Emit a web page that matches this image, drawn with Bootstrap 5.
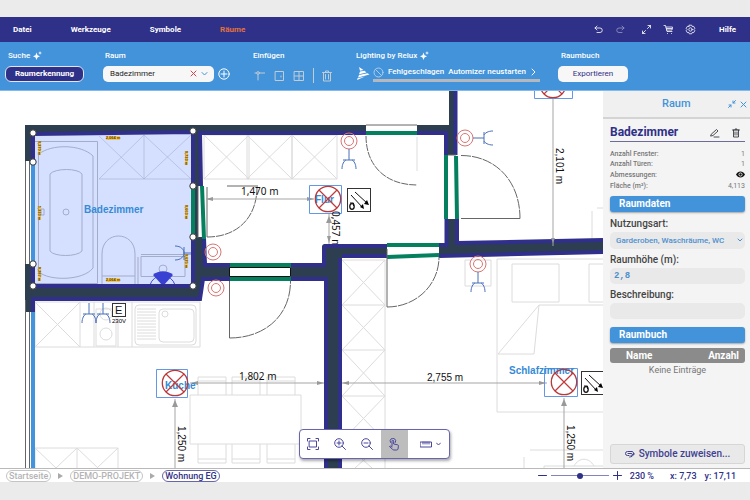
<!DOCTYPE html>
<html lang="de">
<head>
<meta charset="utf-8">
<meta name="viewport" content="width=device-width, initial-scale=1">
<title>Raumplaner</title>
<link href="https://cdn.jsdelivr.net/npm/bootstrap@5.3.0/dist/css/bootstrap.min.css" rel="stylesheet">
<style>
:root{--navy:#2f3088;--sky:#4393da}
body{font-family:Roboto,sans-serif;font-size:9px;line-height:12px;background:#ebebeb;padding:17px 0 18px}
svg{display:block;flex:none}
button,input,select{font:inherit;color:inherit}
.plain{background:none;border:0;padding:0}
.ico{fill:none;stroke:currentColor;stroke-width:1;stroke-linecap:round;stroke-linejoin:round}
.topbar{background:var(--navy);color:#fff;height:25px;padding:0 14px 0 13px;font-size:8px;font-weight:700}
.topbar .ico{stroke-width:.8}
.topbar a{color:#fff;text-decoration:none}
.topbar a.current{color:#e2703d}
.menu{gap:39px}
.tools{gap:11px}
.ribbon{background:var(--sky);color:#fff;height:49px;padding:7px 8px 0;border-bottom:1px solid #86b9e8;display:grid;grid-template-columns:97px 148px 103px 205px 1fr;font-size:8px}
.ribbon h2{font-size:8px;line-height:13px;font-weight:500;margin:0 0 3px;display:flex;gap:3px;align-items:center}
.ctl{height:17px;display:flex;align-items:center}
.scan{background:var(--navy);border:1px solid #dfe6f5;border-radius:6px;height:16px;width:79px;margin-left:-3px;font-weight:700;padding:0}
.combo{background:#f7f7f7;border-radius:5px;width:111px;height:16px;margin-left:-2px;padding:0 6px 0 7px;color:#222}
.combo input{background:none;border:0;min-width:0;flex:1;padding:0}
.export{background:#f7f7f7;color:var(--navy);border:0;border-radius:5px;height:16px;width:70px;margin-left:-3px}
.job{border-bottom:3px solid #b5b9be;height:17px;width:167px;font-weight:500;white-space:nowrap}
.stage{background:#fff;min-width:0}
.stage>svg{position:absolute;inset:0;width:100%;height:100%}
.zoombar{position:absolute;left:50%;transform:translateX(-3px);bottom:9px;background:#fff;border:1px solid #6864ad;border-radius:4px;height:30px;color:#4a479d;box-shadow:1px 2px 3px #0005;z-index:2}
.zoombar button{width:27px;height:28px;display:flex;align-items:center;justify-content:center}
.zoombar button.on{background:#bdbdbd}
.zoombar button.wide{width:41px;gap:4px;padding-left:4px}
.side{width:147px;background:#f4f4f4;flex:none;color:#555}
.side header{height:28px;background:#f0f0f0;border-bottom:2px solid #d4d4d4;color:var(--sky);padding:0 3px 0 7px}
.side header h1{font-size:11px;font-weight:500;margin:0 0 0 52px}
.side header .ico{color:var(--sky)}
.sbody{padding:5px 5px 4px 7px}
.rname{height:18px;border-bottom:1px solid #6d6a9c;color:var(--navy);margin-bottom:7px;padding-right:5px}
.rname .ico{stroke-width:.8}
.rname h2{font-size:12px;font-weight:700;margin:0}
.facts{margin:0 0 5px;font-size:7px;color:#777}
.facts div{display:flex;justify-content:space-between;height:10px;line-height:10px;align-items:center}
.facts div+div+div{height:11px}
.facts dt{font-weight:500}
.facts dd{margin:0}
.sect{background:var(--sky);color:#fff;border-radius:3px;height:16px;line-height:15px;font-size:10px;font-weight:700;padding-left:9px;margin:0;box-shadow:0 1px 2px #0005}
.side label{font-size:10px;line-height:12px;font-weight:500;color:#444;display:block;margin:5px 0 2px}
.side .sect+label{margin-top:6px}
.field{display:block;width:100%;height:16px;border:0;border-radius:5px;background:#e9e9e9;color:#4d90ce;padding:0 4px;font-weight:500}
select.field{appearance:none;font-size:8px;height:17px;padding:0 6px}
.pick{position:relative}
.pick svg{position:absolute;right:2px;top:6px;color:var(--sky);pointer-events:none}
.mono{font-family:"Liberation Mono",monospace;font-weight:700}
.book{width:100%;margin-top:5px;font-size:10px;border-collapse:separate;border-spacing:0}
.book th{background:#8b8b8b;color:#fff;height:15px;line-height:15px;padding:0 6px 0 16px;font-weight:700}
.book th:first-child{border-radius:3px 0 0 3px}
.book th:last-child{border-radius:0 3px 3px 0;text-align:right}
.book td{font-size:9px;line-height:11px;text-align:center;padding-top:2px;color:#777}
.assign{background:#e9e9e9;border:1px solid #d6d6d6;border-radius:3px;height:20px;color:#403e91;font-size:10px;font-weight:500}
.status{background:#fff;border-top:1px solid #b9b9b9;height:14px;padding:0 14px 0 6px;color:var(--navy);font-weight:500}
.crumbs{gap:7px}
.crumbs a{border:1px solid #c4c4c4;border-radius:6px;color:#b4b4b4;text-decoration:none;height:12px;line-height:10px;padding:0 2px}
.crumbs a.here{border-color:#6865aa;color:var(--navy)}
.slide{appearance:none;width:58px;height:8px;background:linear-gradient(#8583ba,#8583ba) center/100% 1px no-repeat;margin:0}
.slide::-webkit-slider-thumb{appearance:none;width:6px;height:6px;border-radius:50%;background:var(--navy)}
.wall{fill:#2c3e50}.edge{fill:none;stroke:#302f8b;stroke-width:4}.open{fill:none;stroke:#04805f;stroke-width:4}
.thin{fill:none;stroke:#dcdcdc;stroke-width:1}.dim{fill:none;stroke:#a5a5a5;stroke-width:1}
.swing{fill:none;stroke:#666;stroke-width:1}.bath{fill:none;stroke:#a3adc9;stroke-width:1}
.red{fill:none;stroke:#d77775;stroke-width:1}.blu{fill:none;stroke:#496fba;stroke-width:1}
.lbl{font:700 10px "Liberation Sans",sans-serif;fill:#368bd5}
.num{font:10px "Liberation Sans",sans-serif;fill:#111}
.num2{font:10px "Noto Sans",sans-serif;fill:#111}
.tag{font:700 4px "Liberation Sans",sans-serif;fill:#5c4200;text-anchor:middle}
</style>
<script src="https://cdn.jsdelivr.net/npm/bootstrap@5.3.0/dist/js/bootstrap.bundle.min.js"></script>
</head>
<body class="min-vh-100 d-flex flex-column">
<nav class="topbar d-flex align-items-center justify-content-between">
  <div class="menu d-flex"><a href="#">Datei</a><a href="#">Werkzeuge</a><a href="#">Symbole</a><a href="#" class="current">Räume</a></div>
  <div class="tools d-flex align-items-center">
    <button class="plain" aria-label="Rückgängig"><svg class="ico" width="11" height="11" viewBox="0 0 11 11"><path d="M4 2 2 4l2 2M2 4h5a2.2 2.2 0 0 1 0 4.500H4"/></svg></button>
    <button class="plain opacity-50" aria-label="Wiederholen"><svg class="ico" width="11" height="11" viewBox="0 0 11 11"><path d="m7 2 2 2-2 2M9 4H4a2.200 2.200 0 0 0 0 4.500h3"/></svg></button>
    <button class="plain ms-1" aria-label="Vollbild"><svg class="ico" width="11" height="11" viewBox="0 0 11 11"><path d="M6.500 4.500 9.500 1.500M7 1.500h2.500V4M4.500 6.500l-3 3M1.500 7v2.500H4"/></svg></button>
    <button class="plain" aria-label="Warenkorb"><svg class="ico" width="11" height="11" viewBox="0 0 11 11"><path d="M1 1.500h1.500L4 7.500h5M3 3h6.500L9 6H3.700M3.500 4.500h5.500M4.500 9.500h.1M8.500 9.500h.1"/></svg></button>
    <button class="plain" aria-label="Einstellungen"><svg class="ico" width="11" height="11" viewBox="0 0 11 11"><path d="M4.300 1.200h2.400l.5 1.300 1.500-.1 1.100 2-.9 1.100.9 1.100-1.100 2-1.500-.1-.5 1.300H4.300l-.5-1.300-1.500.1-1.100-2 .9-1.100-.9-1.100 1.100-2 1.500.1z"/><circle cx="5.500" cy="5.500" r="1.700"/></svg></button>
    <a href="#" class="ms-2 ps-1">Hilfe</a>
  </div>
</nav>
<section class="ribbon">
  <div><h2>Suche <svg width="9" height="9" viewBox="0 0 9 9" fill="#fff"><path d="M3.500 1.500 4.500 4.200 7 5.300 4.500 6.400 3.500 9 2.500 6.400 0 5.300 2.500 4.200zM7 0l.5 1.500L9 2l-1.500.5L7 4l-.5-1.500L5 2l1.500-.5z"/></svg></h2><div class="ctl"><button class="scan">Raumerkennung</button></div></div>
  <div><h2><label for="room">Raum</label></h2><div class="ctl"><div class="combo d-flex align-items-center"><input id="room" value="Badezimmer"><button class="plain d-flex" aria-label="Leeren"><svg class="ico" width="7" height="7" viewBox="0 0 7 7" style="color:#d8434e"><path d="m1 1 5 5M6 1 1 6"/></svg></button><button class="plain d-flex ms-1" aria-label="Auswahl"><svg class="ico" width="7" height="7" viewBox="0 0 7 7" style="color:#4393da"><path d="m1 2.500 2.500 2.500L6 2.500"/></svg></button></div><button class="plain d-flex ms-1" aria-label="Raum hinzufügen"><svg class="ico" width="12" height="12" viewBox="0 0 12 12"><circle cx="6" cy="6" r="5.200"/><path d="M6 3v6M3 6h6"/></svg></button></div></div>
  <div><h2>Einfügen</h2><div class="ctl pt-1" style="color:#c3cbd3;gap:8px">
    <button class="plain" aria-label="Wand"><svg class="ico" width="12" height="12" viewBox="0 0 12 12"><path d="M5 4.500V10M6.500 3H12M3.500 3H2"/><circle cx="5" cy="3" r="1.300"/></svg></button>
    <button class="plain" aria-label="Tür"><svg class="ico" width="12" height="12" viewBox="0 0 12 12"><path d="M2.500 1.500h8v9h-8zM8 6v1M4.500 10.500h4"/></svg></button>
    <button class="plain" aria-label="Fenster"><svg class="ico" width="12" height="12" viewBox="0 0 12 12"><path d="M1.500 1.500h9v9h-9zM6 1.500v9M1.500 6h9"/></svg></button>
    <svg width="1" height="15" viewBox="0 0 1 15" fill="currentColor"><path d="M0 0h1v15H0z"/></svg>
    <button class="plain" aria-label="Löschen"><svg class="ico" width="10" height="12" viewBox="1 0 10 12"><path d="M1.500 2.500h9M4.500 2.500V1h3v1.500M2.500 2.500V11h7V2.500M4.500 4.500v4.500M7.500 4.500v4.500"/></svg></button></div></div>
  <div><h2>Lighting by Relux <svg width="9" height="9" viewBox="0 0 9 9" fill="#fff"><path d="M3.500 1.500 4.500 4.200 7 5.300 4.500 6.400 3.500 9 2.500 6.400 0 5.300 2.500 4.200zM7 0l.5 1.500L9 2l-1.500.5L7 4l-.5-1.500L5 2l1.500-.5z"/></svg></h2><div class="ctl">
    <svg width="14" height="13" viewBox="0 0 14 13" fill="#fff"><path d="M3 0 7.500 3 4 3.800zM4 4.500 8.500 3.800 10.500 5.500 3 7.200zM3 8 11.500 6.200 13.500 7.500 2 10.500zM1.500 11.200 9 9.600 1 13z"/></svg>
    <div class="job d-flex align-items-center" style="margin-left:3px"><svg class="ico" width="11" height="11" viewBox="0 0 11 11" style="color:#a9cdee"><circle cx="5.500" cy="5.500" r="4.500"/><path d="m2.500 2.500 6 6"/></svg><span class="ms-1">Fehlgeschlagen</span><button class="plain ms-1">Automizer neustarten</button><svg class="ico ms-auto me-1" width="5" height="8" viewBox="0 0 5 8"><path d="m1 1 3 3-3 3"/></svg></div></div></div>
  <div><h2>Raumbuch</h2><div class="ctl"><button class="export">Exportieren</button></div></div>
</section>
<main class="d-flex flex-fill">
  <div class="stage position-relative flex-fill overflow-hidden">
  <svg viewBox="0 91 603 377" preserveAspectRatio="xMinYMin slice" role="img" aria-label="Grundriss Wohnung EG">
    <defs>
      <g id="lamp"><circle r="12.700" fill="none" stroke="#b63a3c" stroke-width="1.300"/><path d="m-9-9 18 18M9-9-9 9" stroke="#c2393a" stroke-width="1.200"/></g>
      <g id="outlet" class="red"><circle r="8"/><circle r="4.500"/></g>
      <g id="fork" class="blu" stroke-width="1.200"><path d="M0 0v11M-6 11H6M-7 20c0-5 2-8 4-9M7 20c0-5-2-8-4-9"/></g>
      <g id="therm"><rect x=".5" y=".5" width="23" height="23" fill="#fff" stroke="#333"/><path d="m4 7 12 13M8 4l13 12" stroke="#111" fill="none"/><path d="m17 21-4-2 3-3zM22 17l-5-1 3-4z"/><ellipse cx="5" cy="18.500" rx="2.200" ry="2.800" fill="none" stroke="#111" stroke-width="1.300"/><path d="M3 15h3.500v3" fill="none" stroke="#111"/></g>
      <g id="box" class="thin"><path d="M0 0h45v44H0zM0 0l45 44M45 0 0 44"/></g>
      <path id="up" d="m0 0 3 7h-6z" fill="#999"/>
    </defs>
    <!-- Möbel und Hilfslinien -->
    <use href="#box" x="204" y="135"/><use href="#box" x="247" y="135"/><use href="#box" x="292" y="135"/>
    <g class="thin"><path d="M342 260h43v208M342 305h43M342 350h43M342 396h43M342 441h43M342 260l43 45M385 260l-43 45M342 305l43 45M385 305l-43 45M342 350l43 46M385 350l-43 46M342 396l43 45M385 396l-43 45M342 441l30 27M385 441l-30 27"/>
    <path d="M465 260h26v26h-26zM603 259H497v153h106M512 264h47v38h-47zM603 264h-14v38h14M603 305h-64l-41 49h36l5-49M592 243v-32M597 208h6M530 450h73M524 457v11M544 468v-2h59M574 466c5-9 15-9 20 0"/>
    <path d="M35 302h165v45H35zM35 302l45 45M80 302l-45 45M80 302v45M94 302v45M118 302v45M132 302v45M96 309h20v37H96zM35 468v-20h83v20M77 448v20M35 448l21 20M77 448l-21 20M77 448l21 20M118 448l-21 20"/><rect x="135" y="305" width="61" height="40" rx="4"/><rect x="159" y="309" width="35" height="33" rx="4"/><circle cx="165" cy="314" r="3"/><circle cx="106" cy="334" r="6"/><circle cx="106" cy="314" r="6"/><path d="M137 309h19M137 312h19M137 315h19M137 318h19M137 321h19M137 324h19M137 327h19M137 330h19M137 333h19M137 336h19M137 339h19"/>
    <path d="M190 395h111v49H190zM198 395v-18h28v18M232 395v-18h28v18M267 395v-18h28v18M198 381h28M232 381h28M267 381h28M198 444v19h28v-19M232 444v19h28v-19M267 444v19h28v-19M198 459h28M232 459h28M267 459h28"/></g>
    <!-- Badezimmer -->
    <path d="M33 134 193 131V286H33z" fill="#d5dfff"/>
    <g class="bath"><path d="M35 141.500h62.500v142H35M38.500 153v119"/><path d="M39 154c12-10 42-10 54 2v112c-10 13-44 13-54 4"/><path d="M50 174c5-6 28-6 32 0v77c-5 6-28 6-32 0z"/><circle cx="66" cy="212" r="3"/><path d="M41 209h3v6h-3zM102 285v-31c0-24 33-24 33 0v31M102 276h33M138 257v28M141 254.500h50M141 256.500h44v20h-44z"/><circle cx="163" cy="269" r="4"/><path d="M99 136 144 179h47M144 135v44M144 135l47 44M191 135l-47 44M144 135l-45 44h45" opacity=".55"/></g>
    <path d="M150 285a13 13 0 0 1 25 0" fill="none" stroke="#4148d5"/><path d="m163 286-10-11c5-5 15-5 20 0z" fill="#3941d2"/><path class="blu" d="M175 246c12 0 12 14 0 14M184 247v13M184 253h12"/>
    <!-- Wände -->
    <g class="wall"><path d="M25 125h341v9H193V131L33 134v27h-8zM194 131h8v55h-8zM194 186h4v52h-4zM194 237h9l4 30h23v11h-27l-3 22H31v12h-6v-48h8v22h161zM417 125h32V91h6v64h-7v-22h-31zM291 267h33v-20h63v9h-48v212h-13V278h-35zM448 219h8v25l147-3v11l-164 4v-11h9z"/></g>
    <g class="edge"><path d="M33 134 193 132V286H33zM201 186l-1-53H366M204 238l1 27h25M291 265h33v-16q0-3 3-3h60M387 256h-47v212M326 468V279h-35M230 279h-27l-3 20H33v13M417 133h29v22M455.500 91v64M446.500 219v26h-8M457 219v24l146-3M439 256l164-4"/></g>
    <g class="open"><path d="M193 186v51M202 186l2 53M230 265h61M230 279h61M366 133h51M446 155v64M456 156l1 63M387 245h52M387 257l52-2"/></g>
    <path d="M33 161v103M33 312v156" fill="none" stroke="#4295dd" stroke-width="4"/>
    <path d="M25.500 161v103M29.500 161v103M25.500 300v168M29.500 312v156M198 186v52M366 125h51M387 249v8M448 155h8" stroke="#666" fill="none"/>
    <path d="M229.500 267.500h61v9h-61z" fill="#fff" stroke="#111"/>
    <!-- Türen -->
    <g class="swing"><path d="M207 187v50M227 186h31"/><path d="M207 237c31 0 50-20 50-50" stroke-dasharray="8 1"/><path d="M229.500 281v57"/><path d="M229.500 338c34 0 61-21 61-57" stroke-dasharray="12 1"/><path d="M366 136c0 30 20 49 51 49" stroke-dasharray="7 1"/><path d="M461 155.500c34 0 59 25 59 63" stroke-dasharray="10 1"/><path d="M461 218.500h59M387 257v50"/><path d="M387 307c29 0 52-22 52-50" stroke-dasharray="10 1"/><path d="M417 137v34" stroke="#ddd"/></g>
    <!-- Bemaßung -->
    <g class="dim"><path d="M206 199h108M329 214v30M190 383h134M342 383h205M175 399v69M564 398v70M553 98v148"/></g>
    <use href="#up" x="329" y="216"/><use href="#up" x="175" y="400"/><use href="#up" x="564" y="399"/>
    <path d="m206 199 7-2v4zM314 199l-7-2v4zM191 383l7-2v4zM324 383l-7-2v4zM342 383l7-2v4zM546 383l-7-2v4zM329 243l-2-7h4zM551 238h4l-2 5z" fill="#999"/>
    <!-- Symbole -->
    <g fill="none" stroke="#6498e6"><path d="M309.500 185.500h32v28h-32zM156.500 369.500h31v28h-31zM544.500 368.500h33v28h-33zM534.500 80.500h38v18h-38z"/></g>
    <text class="lbl" x="84" y="213">Badezimmer</text><text class="lbl" x="315" y="203">Flur</text><text class="lbl" x="165" y="389">Küche</text><text class="lbl" x="509" y="374">Schlafzimmer</text>
    <use href="#lamp" x="328" y="199"/><use href="#lamp" x="175" y="383"/><use href="#lamp" x="564" y="382"/><use href="#lamp" x="553" y="85"/>
    <use href="#outlet" x="349" y="141"/><use href="#outlet" x="465" y="138"/><use href="#outlet" x="213" y="252"/><use href="#outlet" x="216" y="288"/><use href="#outlet" x="478" y="264"/>
    <use href="#fork" x="349" y="149"/><use href="#fork" x="478" y="272"/><use href="#fork" transform="translate(473 138) rotate(-90)"/><use href="#fork" x="89" y="303"/><use href="#fork" x="103" y="303"/>
    <use href="#therm" x="347" y="188"/><use href="#therm" x="581" y="371"/>
    <rect x="112.500" y="303.500" width="13" height="13" fill="#fff" stroke="#333"/><text x="115" y="314" class="num" style="font-size:11px">E</text><text x="112" y="323" style="font:6px 'Liberation Sans',sans-serif">230V</text>
    <text class="num2" x="241" y="195">1,470 m</text><text class="num2" x="239" y="380">1,802 m</text><text class="num" x="427" y="381">2,755 m</text>
    <text class="num" transform="translate(556 148) rotate(90)">2,101 m</text><text class="num2" transform="translate(332 211) rotate(90)">0,457 m</text><text class="num" transform="translate(178 426) rotate(90)">1,250 m</text><text class="num" transform="translate(567 425) rotate(90)">1,250 m</text>
    <path d="M322 264v-17q0-3 3-3h17v14h-13v6z" fill="#2c3e50"/><path class="edge" d="M324 265v-16q0-3 3-3h15"/>
    <!-- Kantenlängen -->
    <g fill="#f0c75e"><path d="M106 136h14v4h-14zM106 278h14v4h-14zM38 141h3v14h-3zM38 206h3v14h-3zM38 267h3v14h-3zM185 151h3v14h-3zM185 205h3v14h-3zM185 254h3v14h-3z"/></g>
    <g class="tag"><text x="113" y="139">2,064 m</text><text x="113" y="281">2,064 m</text><text transform="translate(38 148) rotate(90)">0,370 m</text><text transform="translate(38 213) rotate(90)">1,333 m</text><text transform="translate(38 274) rotate(90)">0,287 m</text><text transform="translate(185 158) rotate(90)">0,733 m</text><text transform="translate(185 212) rotate(90)">0,663 m</text><text transform="translate(185 261) rotate(90)">0,625 m</text></g>
    <g fill="#fff" stroke="#333"><circle cx="33" cy="133" r="3.200"/><circle cx="33" cy="162" r="3.200"/><circle cx="33" cy="264" r="3.200"/><circle cx="33" cy="286" r="3.200"/><circle cx="193" cy="131" r="3.200"/><circle cx="193" cy="186" r="3.200"/><circle cx="193" cy="237" r="3.200"/><circle cx="193" cy="286" r="3.200"/></g>
  </svg>
  <div class="zoombar d-flex">
    <button class="plain" aria-label="Einpassen"><svg class="ico" width="12" height="12" viewBox="0 0 12 12"><path d="M.5 3V.5H3M9 .5h2.500V3M11.500 9v2.500H9M3 11.500H.5V9M2.500 3h7v6h-7z"/></svg></button>
    <button class="plain" aria-label="Vergrößern"><svg class="ico" width="12" height="12" viewBox="0 0 12 12"><circle cx="5" cy="5" r="4.300"/><path d="m8 8 3.500 3.500M5 3v4M3 5h4"/></svg></button>
    <button class="plain" aria-label="Verkleinern"><svg class="ico" width="12" height="12" viewBox="0 0 12 12"><circle cx="5" cy="5" r="4.300"/><path d="m8 8 3.500 3.500M3 5h4"/></svg></button>
    <button class="plain on" aria-label="Auswählen"><svg class="ico" width="12" height="13" viewBox="0 0 12 13"><path d="M4 8V3.200q0-1 .8-1t.8 1V6l4 .8q1 .3.8 1.300L10 11q-.3 1-1.300 1H6q-1 0-1.500-.7L1.500 8.500q.7-1.200 2.500.4M2.500 4.500a2.800 2.800 0 1 1 4.800 0"/></svg></button>
    <button class="plain wide" aria-label="Messen"><svg class="ico" width="12" height="7" viewBox="0 0 12 7"><path d="M.5 1h11v5H.5zM3 1v2M5 1v2M7 1v2M9 1v2"/></svg><svg class="ico" width="5" height="4" viewBox="0 0 5 4"><path d="m.5 1 2 2 2-2"/></svg></button>
  </div>
  </div>
  <aside class="side d-flex flex-column">
    <header class="d-flex align-items-center"><h1 class="me-auto">Raum</h1><button class="plain d-flex" aria-label="Verkleinern"><svg class="ico" width="8" height="8" viewBox="0 0 8 8"><path d="M7.500.5 5 3M5 1v2h2M.5 7.500 3 5M1 5h2v2"/></svg></button><button class="plain d-flex ms-1" aria-label="Schließen"><svg class="ico" width="7" height="7" viewBox="0 0 7 7"><path d="m1 1 5 5M6 1 1 6"/></svg></button></header>
    <div class="sbody d-flex flex-column flex-fill">
      <div class="rname d-flex align-items-center"><h2 class="me-auto">Badezimmer</h2><button class="plain d-flex text-dark me-2" aria-label="Umbenennen"><svg class="ico" width="10" height="10" viewBox="0 0 10 10"><path d="m1.500 6 5-4.500 1.500 1.500-5 4.500-2 .5zM4 9h5"/></svg></button><button class="plain d-flex text-dark ms-1" aria-label="Löschen"><svg class="ico" width="8" height="10" viewBox="0 0 8 10"><path d="M.5 2h7M3 2V1h2v1M1.500 2v7h5V2M3 4v3M5 4v3"/></svg></button></div>
      <dl class="facts"><div><dt>Anzahl Fenster:</dt><dd>1</dd></div><div><dt>Anzahl Türen:</dt><dd>1</dd></div><div><dt>Abmessungen:</dt><dd><svg width="9" height="7" viewBox="0 0 9 7"><path d="M0 3.500C2-.5 7-.5 9 3.500 7 7.500 2 7.500 0 3.500z" fill="#111"/><circle cx="4.500" cy="3.500" r="1.600" fill="none" stroke="#fff" stroke-width=".8"/></svg></dd></div><div><dt>Fläche (m²):</dt><dd>4,113</dd></div></dl>
      <h3 class="sect">Raumdaten</h3>
      <label for="use">Nutzungsart:</label>
      <div class="pick"><select id="use" class="field"><option>Garderoben, Waschräume, WC</option></select><svg class="ico" width="6" height="5" viewBox="0 0 6 5"><path d="m1 1 2 2 2-2"/></svg></div>
      <label for="height">Raumhöhe (m):</label><input id="height" class="field mono" value="2,8">
      <label for="desc">Beschreibung:</label><input id="desc" class="field">
      <h3 class="sect mt-2">Raumbuch</h3>
      <table class="book"><thead><tr><th>Name</th><th>Anzahl</th></tr></thead><tbody><tr><td colspan="2">Keine Einträge</td></tr></tbody></table>
      <button class="assign mt-auto d-flex align-items-center justify-content-center gap-1"><svg class="ico" width="10" height="8" viewBox="0 0 10 8"><path d="M4 5.500H2.500a2 2 0 0 1 0-4H7a2 2 0 0 1 1.500 3M3 3.500h3.500M4.500 7l4-3.500M6 7l3.500-3"/></svg>Symbole zuweisen...</button>
    </div>
  </aside>
</main>
<footer class="status d-flex align-items-center justify-content-between">
  <nav class="crumbs d-flex align-items-center"><a href="#">Startseite</a><svg width="5" height="6" viewBox="0 0 5 6" fill="#aaa"><path d="m0 0 5 3-5 3z"/></svg><a href="#">DEMO-PROJEKT</a><svg width="5" height="6" viewBox="0 0 5 6" fill="#aaa"><path d="m0 0 5 3-5 3z"/></svg><a href="#" class="here">Wohnung EG</a></nav>
  <div class="d-flex align-items-center"><button class="plain d-flex me-1" aria-label="Kleiner"><svg class="ico" width="9" height="9" viewBox="0 0 9 9"><path d="M.5 4.500h8"/></svg></button><input class="slide" type="range" aria-label="Zoom" value="50"><button class="plain d-flex ms-1 me-2" aria-label="Größer"><svg class="ico" width="9" height="9" viewBox="0 0 9 9"><path d="M.5 4.500h8M4.500.5v8"/></svg></button><span class="me-3">230 %</span><span class="me-2">x: 7,73</span><span>y: 17,11</span></div>
</footer>
</body>
</html>
